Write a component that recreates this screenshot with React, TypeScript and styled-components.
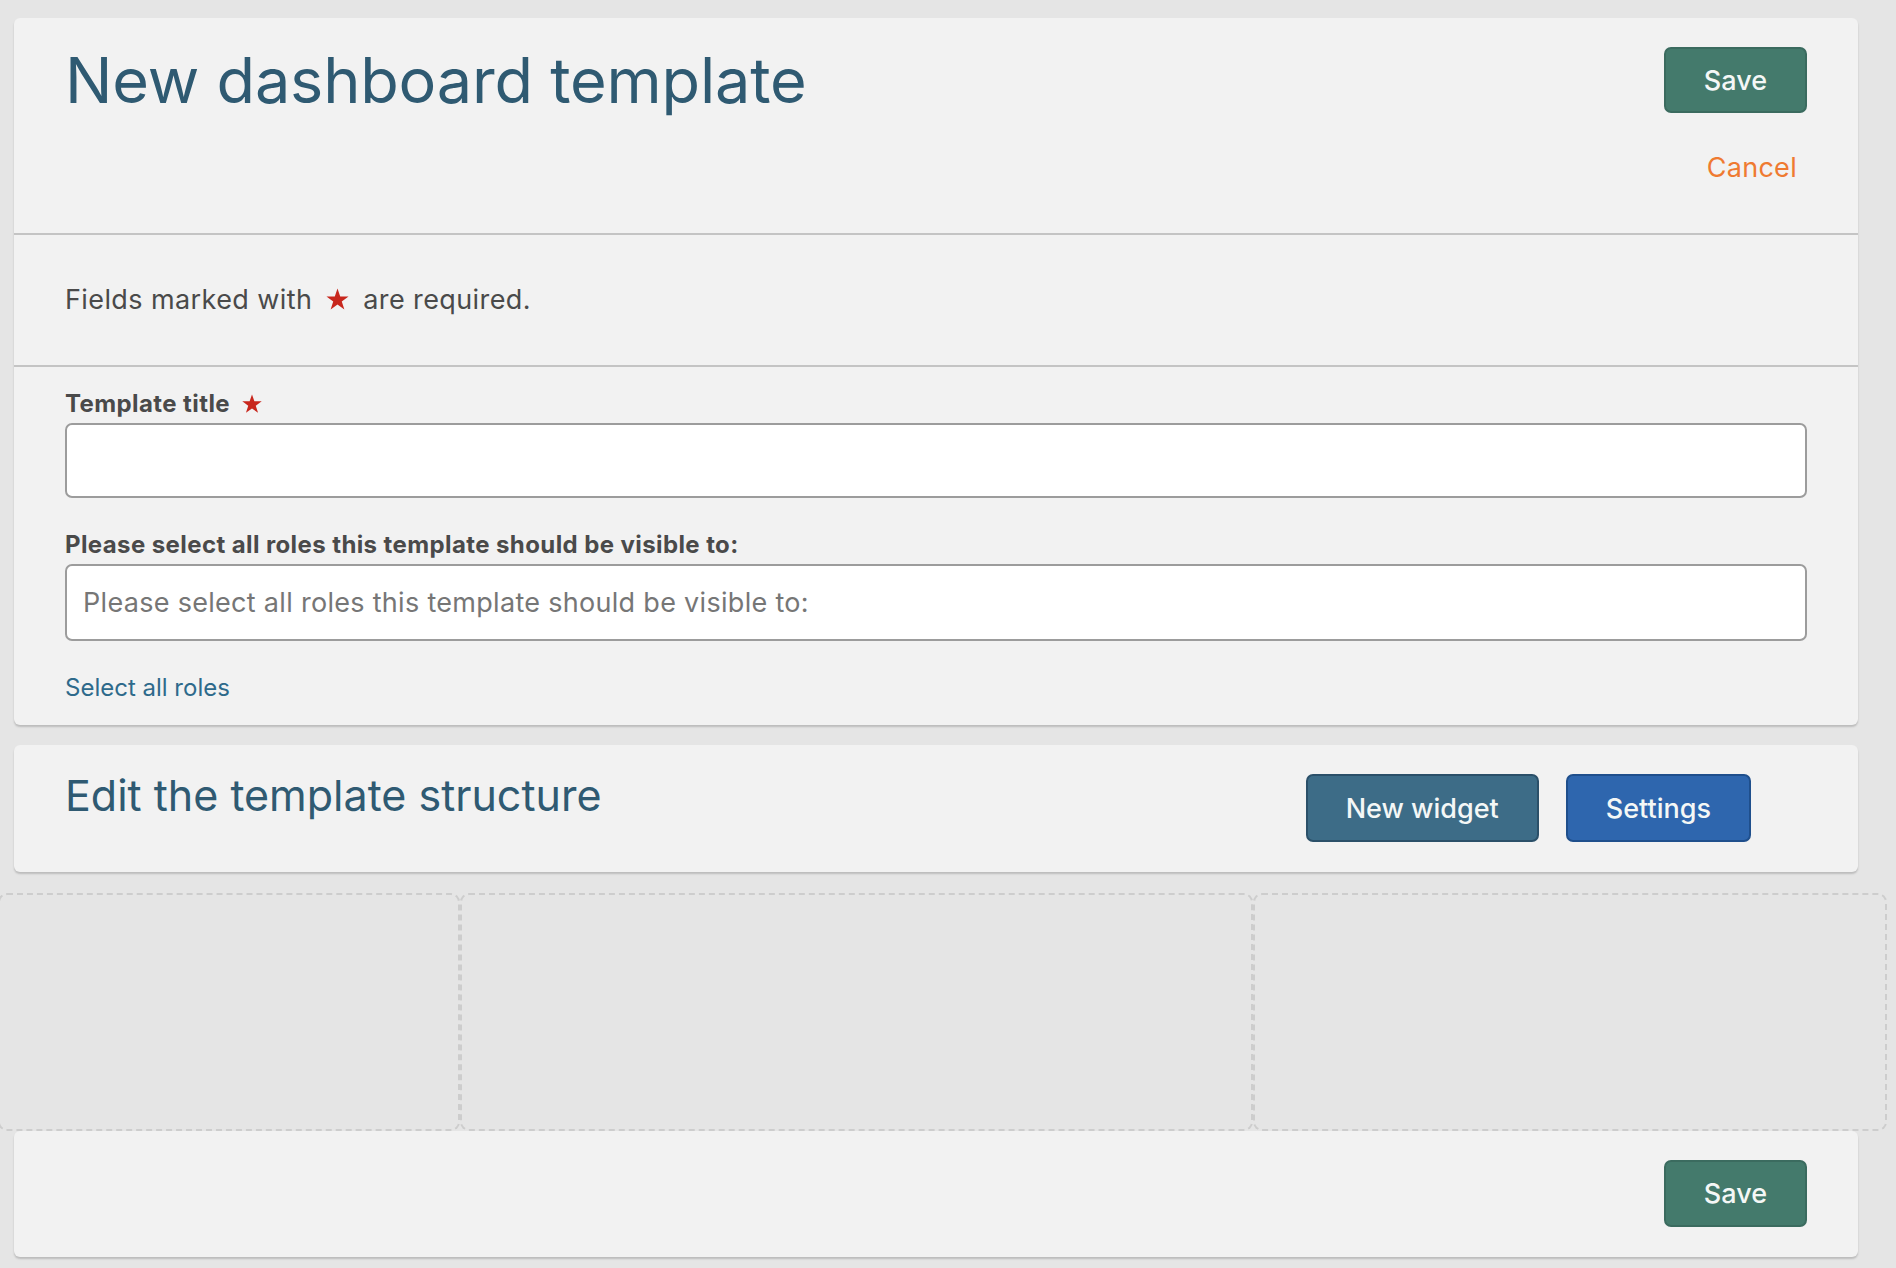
import * as React from "react";
import styled, { createGlobalStyle } from "styled-components";

const GlobalStyle = createGlobalStyle`
  html, body {
    margin: 0;
    padding: 0;
    background: #e5e5e5;
    font-family: Inter, "Noto Sans", sans-serif;
    overflow: hidden;
  }
  * { box-sizing: border-box; }
`;

const Page = styled.div`
  display: flex;
  flex-direction: column;
  padding: 18px 38px 0 14px;
  min-height: 1268px;
`;

const Card = styled.section<{ $gap?: number }>`
  background: #f2f2f2;
  border-radius: 6px;
  box-shadow: 0 2px 2px rgba(0, 0, 0, 0.18);
  margin-bottom: ${(p) => p.$gap ?? 0}px;
`;

const Header = styled.div`
  display: flex;
  justify-content: space-between;
  align-items: flex-start;
  height: 217px;
  padding: 24px 51px 0 51px;
  border-bottom: 2px solid #c4c4c4;
`;

const Title = styled.h1`
  margin: 0;
  font-size: 63px;
  line-height: 76px;
  font-weight: 400;
  color: #2f5a72;
  letter-spacing: -0.2px;
`;

const Actions = styled.div`
  display: flex;
  flex-direction: column;
  align-items: flex-end;
  margin-top: 5px;
`;

const Button = styled.button<{ $bg: string; $border: string; $h: number }>`
  height: ${(p) => p.$h}px;
  padding: 0 38px;
  font-family: inherit;
  font-size: 27px;
  font-weight: 500;
  color: #f4f7f6;
  background: ${(p) => p.$bg};
  border: 2px solid ${(p) => p.$border};
  border-radius: 7px;
  cursor: pointer;
`;

const CancelLink = styled.a`
  margin: 38px 10px 0 0;
  font-size: 27px;
  line-height: 34px;
  letter-spacing: 0.3px;
  color: #ef7a31;
  text-decoration: none;
`;

const Notice = styled.p`
  margin: 0;
  padding: 48px 51px 49px;
  font-size: 27px;
  line-height: 33px;
  letter-spacing: 0.4px;
  color: #4a4a4a;
  border-bottom: 2px solid #c4c4c4;
  display: flex;
  align-items: center;
`;

const Star = styled.svg<{ $size: number; $gapL: number; $gapR: number }>`
  width: ${(p) => p.$size}px;
  height: ${(p) => p.$size}px;
  margin: 0 ${(p) => p.$gapR}px 0 ${(p) => p.$gapL}px;
  fill: #c8271d;
  flex: none;
`;

const Fields = styled.div`
  display: flex;
  flex-direction: column;
  padding: 22px 51px 23px;
`;

const Label = styled.label<{ $top?: number }>`
  display: flex;
  align-items: center;
  margin-top: ${(p) => p.$top ?? 0}px;
  font-size: 24px;
  line-height: 29px;
  font-weight: 700;
  letter-spacing: 0.4px;
  color: #4a4a4a;
`;

const Input = styled.input<{ $h: number }>`
  height: ${(p) => p.$h}px;
  width: 100%;
  margin-top: 5px;
  padding: 0 16px;
  font-family: inherit;
  font-size: 27px;
  letter-spacing: 0.3px;
  color: #333;
  background: #fff;
  border: 2px solid #9c9c9c;
  border-radius: 7px;
  outline: none;

  &::placeholder {
    color: #767676;
  }
`;

const TextLink = styled.a`
  margin-top: 32px;
  font-size: 24px;
  line-height: 29px;
  color: #2e6a8b;
  text-decoration: none;
`;

const StructureBar = styled.div`
  display: flex;
  align-items: flex-start;
  height: 127px;
  padding: 24px 107px 0 51px;
`;

const SubTitle = styled.h2`
  flex: 1;
  margin: 0;
  font-size: 43px;
  line-height: 53px;
  font-weight: 400;
  color: #2f5a72;
`;

const ButtonRow = styled.div`
  display: flex;
  gap: 27px;
  margin-top: 5px;
`;

const WidgetGrid = styled.div`
  display: grid;
  grid-template-columns: 462px 793px 634px;
  height: 259px;
  margin: 0 -29px 0 -16px;
  padding-top: 21px;
`;

const DropZone = styled.div`
  border: 2px dashed #cdcdcd;
  border-radius: 9px;
  background: #e5e5e5;
`;

const Footer = styled.div`
  display: flex;
  justify-content: flex-end;
  height: 126px;
  padding: 29px 51px 0;
`;

function StarIcon({ size, gapL = 0, gapR = 0 }: { size: number; gapL?: number; gapR?: number }) {
  return (
    <Star viewBox="0 0 24 24" $size={size} $gapL={gapL} $gapR={gapR}>
      <path d="M12 1.5l2.6 7.6h8l-6.5 4.8 2.5 7.7L12 16.9l-6.6 4.7 2.5-7.7L1.4 9.1h8z" />
    </Star>
  );
}

function App() {
  return (
    <>
      <GlobalStyle />
      <Page>
        <Card $gap={20}>
          <Header>
            <Title>New dashboard template</Title>
            <Actions>
              <Button $bg="#447a6c" $border="#3b6b5f" $h={66}>Save</Button>
              <CancelLink href="#">Cancel</CancelLink>
            </Actions>
          </Header>
          <Notice>
            Fields marked with
            <StarIcon size={25} gapL={13} gapR={13} />
            are required.
          </Notice>
          <Fields>
            <Label>
              Template title
              <StarIcon size={22} gapL={11} />
            </Label>
            <Input $h={75} />
            <Label $top={32}>Please select all roles this template should be visible to:</Label>
            <Input $h={77} placeholder="Please select all roles this template should be visible to:" />
            <TextLink href="#">Select all roles</TextLink>
          </Fields>
        </Card>

        <Card>
          <StructureBar>
            <SubTitle>Edit the template structure</SubTitle>
            <ButtonRow>
              <Button $bg="#3d6c87" $border="#2b5069" $h={68}>New widget</Button>
              <Button $bg="#2e66ae" $border="#1f4f8c" $h={68}>Settings</Button>
            </ButtonRow>
          </StructureBar>
        </Card>

        <WidgetGrid>
          <DropZone />
          <DropZone />
          <DropZone />
        </WidgetGrid>

        <Card>
          <Footer>
            <Button $bg="#447a6c" $border="#3b6b5f" $h={67}>Save</Button>
          </Footer>
        </Card>
      </Page>
    </>
  );
}

export default App;
